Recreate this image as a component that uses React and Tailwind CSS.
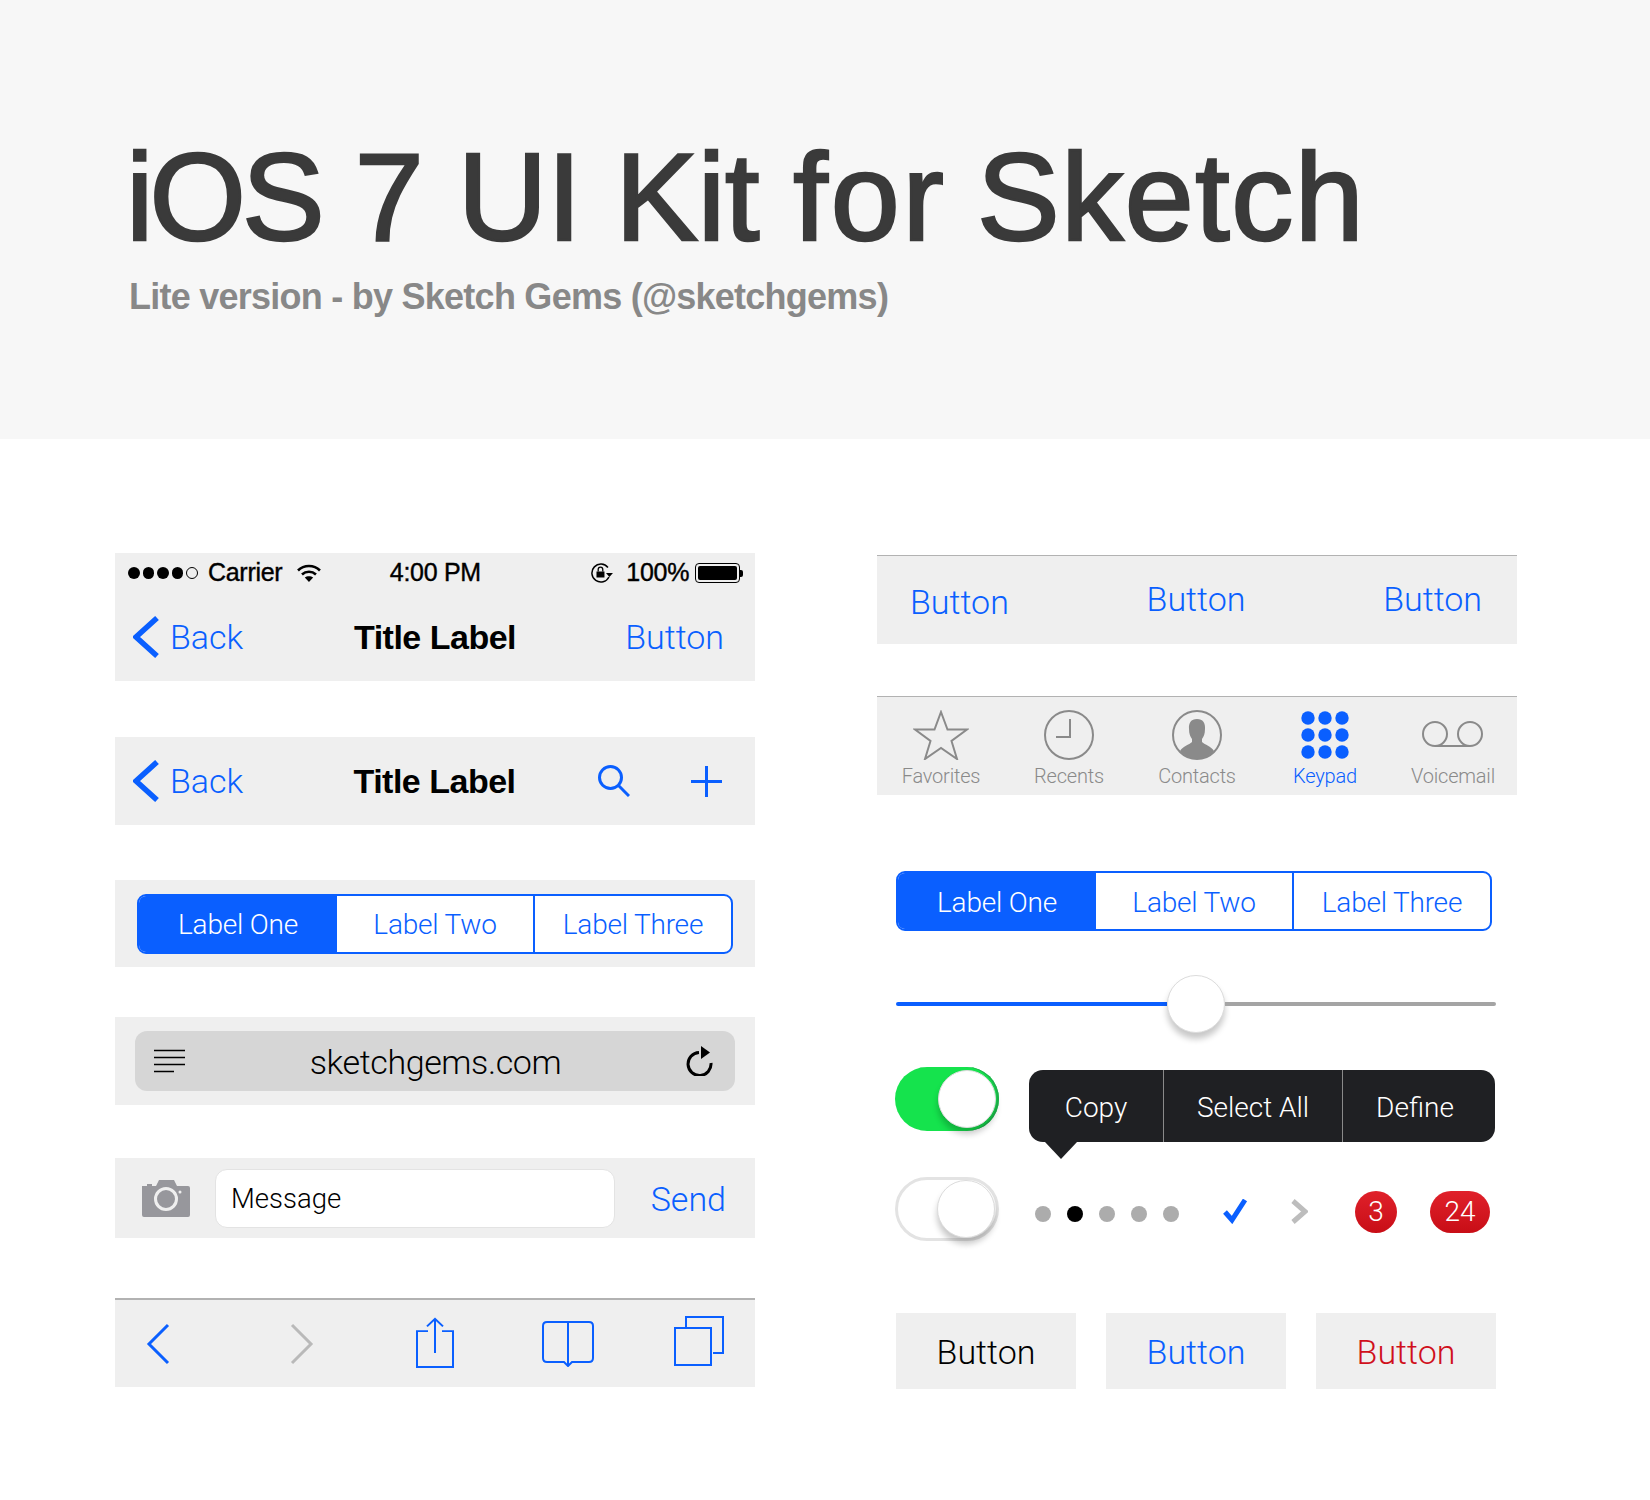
import React from "react";

const blue = "#0a5fff";
const light = "font-['Roboto',sans-serif] font-light";

function Chevron({ className, color = blue, width = 5.5, dir = "left", w = 26, h = 42 }) {
  const d = dir === "left" ? `M${w - 2} 2 L3 ${h / 2} L${w - 2} ${h - 2}` : `M2 2 L${w - 3} ${h / 2} L2 ${h - 2}`;
  return (
    <svg width={w} height={h} viewBox={`0 0 ${w} ${h}`} className={className} fill="none">
      <path d={d} stroke={color} strokeWidth={width} />
    </svg>
  );
}

function Segmented() {
  return (
    <div className={`flex w-[596px] h-[60px] rounded-[9px] border-2 border-[#0a5fff] overflow-hidden text-[28px] tracking-[-0.2px] text-[#0a5fff] bg-white ${light}`}>
      <div className="w-[198px] pt-[3px] flex items-center justify-center bg-[#0a5fff] text-white">Label One</div>
      <div className="w-[198px] pt-[3px] flex items-center justify-center border-r-2 border-[#0a5fff]">Label Two</div>
      <div className="flex-1 pt-[3px] flex items-center justify-center">Label Three</div>
    </div>
  );
}

function BackLink() {
  return (
    <div className="flex items-center w-[206px]">
      <Chevron />
      <span className={`ml-[11px] text-[34px] text-[#0a5fff] ${light}`}>Back</span>
    </div>
  );
}

function TitleLabel() {
  return <div className="flex-1 text-center text-[34px] font-bold tracking-[-0.5px] text-black">Title Label</div>;
}

function StatusBar() {
  return (
    <div className="h-[40px] pl-[13px] pr-[12px] flex items-center text-[25px] tracking-[-0.3px] text-black [-webkit-text-stroke:0.4px_#000]">
      <div className="flex items-center gap-[3px] w-[70px]">
        {[0, 1, 2, 3].map((i) => (
          <span key={i} className="w-[12px] h-[12px] rounded-full bg-black" />
        ))}
        <span className="w-[12px] h-[12px] rounded-full border border-black" />
      </div>
      <span className="ml-[10px] w-[89px]">Carrier</span>
      <svg width="24" height="18" viewBox="0 0 24 18" fill="none" stroke="#000" strokeWidth="2.6">
        <path d="M1 6.500 C7 0.500 17 0.500 23 6.500" />
        <path d="M5 10.500 C9 6.800 15 6.800 19 10.500" />
        <path d="M12 18 L7.800 13.600 C10 11.800 14 11.800 16.200 13.600 Z" fill="#000" stroke="none" />
      </svg>
      <span className="ml-[69px] w-[233px]">4:00 PM</span>
      <svg width="24" height="20" viewBox="0 0 24 20" fill="none" className="-ml-[32px]">
        <path d="M18 4.500 A9 9 0 1 0 19 14" stroke="#000" strokeWidth="1.500" />
        <path d="M16 10 L23 10 L19.500 14 Z" fill="#000" />
        <rect x="6.500" y="8.500" width="8" height="6" fill="#000" />
        <path d="M8.200 8.500 V6.500 A2.300 2.300 0 0 1 12.800 6.500 V8.500" stroke="#000" strokeWidth="1.300" />
      </svg>
      <span className="ml-[12px]">100%</span>
      <div className="ml-[6px] w-[45px] h-[20px] rounded-[4px] border border-black p-[2px]">
        <div className="w-full h-full rounded-[2px] bg-black" />
      </div>
      <span className="w-[3px] h-[7px] bg-black rounded-r-[2px]" />
    </div>
  );
}

function TabBar() {
  const grey = "#8a8a8a";
  const items = [
    {
      label: "Favorites",
      icon: (
        <svg width="56" height="50" viewBox="0 0 56 50" fill="none" stroke={grey} strokeWidth="2">
          <path d="M28 2 L34.500 19.500 L54 19.500 L38.500 31 L44 49 L28 38 L12 49 L17.500 31 L2 19.500 L21.500 19.500 Z" />
        </svg>
      ),
    },
    {
      label: "Recents",
      icon: (
        <svg width="50" height="50" viewBox="0 0 50 50" fill="none" stroke={grey} strokeWidth="2">
          <circle cx="25" cy="25" r="24" />
          <path d="M26 9 V27 H12" />
        </svg>
      ),
    },
    {
      label: "Contacts",
      icon: (
        <svg width="50" height="50" viewBox="0 0 50 50" fill="none">
          <circle cx="25" cy="25" r="24" stroke={grey} strokeWidth="2" />
          <path
            d="M25 9 C31 9 33.500 13 33 19 C33 24 31.500 27 30 29 L30 32 C33 35 39 36 42 41 C38 46 31 49 25 49 C19 49 12 46 8 41 C11 36 17 35 20 32 L20 29 C18.500 27 17 24 17 19 C16.500 13 19 9 25 9 Z"
            fill={grey}
          />
        </svg>
      ),
    },
    {
      label: "Keypad",
      active: true,
      icon: (
        <svg width="48" height="48" viewBox="0 0 48 48" fill={blue}>
          {[7, 24, 41].map((y) =>
            [7, 24, 41].map((x) => <circle key={`${x}-${y}`} cx={x} cy={y} r="6.700" />)
          )}
        </svg>
      ),
    },
    {
      label: "Voicemail",
      icon: (
        <svg width="62" height="50" viewBox="0 0 62 50" fill="none" stroke={grey} strokeWidth="2">
          <circle cx="13" cy="24" r="12" />
          <circle cx="48" cy="24" r="12" />
          <path d="M13 36 H48" />
        </svg>
      ),
    },
  ];
  return (
    <div className="h-[99px] mt-[52px] bg-[#efefef] border-t border-[#b2b2b2] flex">
      {items.map((item) => (
        <div key={item.label} className="w-[128px] flex flex-col items-center">
          <div className="h-[52px] mt-[12px] flex items-center justify-center">{item.icon}</div>
          <span className={`text-[20px] tracking-[-0.2px] ${light} ${item.active ? "text-[#0a5fff]" : "text-[#8a8a8a]"}`}>
            {item.label}
          </span>
        </div>
      ))}
    </div>
  );
}

function Knob() {
  return <div className="w-[58px] h-[58px] rounded-full bg-white border border-[#dcdcdc] shadow-[0_6px_6px_rgba(0,0,0,0.22)]" />;
}

export default function App() {
  return (
    <div className="w-[1650px] min-h-[1500px] bg-white font-['Liberation_Sans',Arial,sans-serif]">
      {/* Header */}
      <header className="h-[439px] bg-[#f7f7f7] pl-[126px] pt-[135px]">
        <h1 className="text-[124px] leading-none tracking-[-0.3px] text-[#3a3a3a] [-webkit-text-stroke:2.5px_#3a3a3a]">
          <span className="tracking-[-4px]">iOS</span> 7 UI Kit <span className="tracking-[3px]">for</span>{" "}
          <span className="-ml-[4px] tracking-[1.5px]">Sketch</span>
        </h1>
        <p className="mt-[20px] ml-[3px] text-[36px] leading-none font-bold tracking-[-0.75px] text-[#888888]">Lite version - by Sketch Gems (@sketchgems)</p>
      </header>

      <main className="flex pl-[115px] gap-[122px]">
        {/* Left column */}
        <div className="w-[640px] pt-[114px]">
          <div className="h-[128px] bg-[#efefef]">
            <StatusBar />
            <div className="h-[88px] flex items-center pl-[18px] pr-[31px]">
              <BackLink />
              <TitleLabel />
              <div className={`w-[193px] text-right text-[34px] text-[#0a5fff] ${light}`}>Button</div>
            </div>
          </div>

          <div className="mt-[56px] h-[88px] bg-[#efefef] flex items-center pl-[18px] pr-[33px]">
            <BackLink />
            <TitleLabel />
            <div className="w-[192px] flex items-center justify-end gap-[61px]">
              <svg width="32" height="32" viewBox="0 0 32 32" fill="none" stroke={blue} strokeWidth="3">
                <circle cx="12.500" cy="12.500" r="11" />
                <path d="M20 20 L31 31" />
              </svg>
              <svg width="31" height="31" viewBox="0 0 31 31" fill="none" stroke={blue} strokeWidth="3">
                <path d="M15.500 0 V31 M0 15.500 H31" />
              </svg>
            </div>
          </div>

          <div className="mt-[55px] h-[87px] bg-[#efefef] flex items-center justify-center">
            <Segmented />
          </div>

          <div className="mt-[50px] h-[88px] bg-[#efefef] flex items-center justify-center">
            <div className="w-[600px] h-[60px] rounded-[12px] bg-[#d6d6d6] flex items-center pl-[19px] pr-[21px] text-black">
              <svg width="31" height="24" viewBox="0 0 31 24" stroke="#000" strokeWidth="1.600">
                <path d="M0 1.500 H31 M0 8.500 H31 M0 15.500 H31 M0 22.500 H20" />
              </svg>
              <span className={`flex-1 pt-[2px] text-center text-[34px] tracking-[-0.4px] ${light}`}>sketchgems.com</span>
              <svg width="28" height="30" viewBox="0 0 28 30" fill="none">
                <path d="M13 6.500 A11.500 11.500 0 1 0 25 17" stroke="#000" strokeWidth="3" />
                <path d="M15 0 L24 6.500 L15 13 Z" fill="#000" />
              </svg>
            </div>
          </div>

          <div className="mt-[53px] h-[80px] bg-[#efefef] flex items-center pl-[27px] pr-[29px]">
            <svg width="48" height="37" viewBox="0 0 48 37">
              <path
                fillRule="evenodd"
                fill="#97979c"
                d="M0 6 H5 V4 H10 V6 H14 L17 0 H32 L35 6 H46 Q48 6 48 8 V35 Q48 37 46 37 H2 Q0 37 0 35 Z M24 7 A12 12 0 1 0 24 31 A12 12 0 1 0 24 7 Z M24 10 A9 9 0 1 1 24 28 A9 9 0 1 1 24 10 Z"
              />
              <circle cx="38" cy="12" r="1.500" fill="#efefef" />
            </svg>
            <div className={`ml-[25px] w-[400px] h-[59px] rounded-[12px] bg-white border border-[#e3e3e3] flex items-center pl-[15px] pt-[2px] text-[27.500px] text-black ${light}`}>
              Message
            </div>
            <span className={`ml-auto pt-[2px] text-[34px] text-[#0a5fff] ${light}`}>Send</span>
          </div>

          <div className="mt-[60px] h-[89px] bg-[#efefef] border-t-2 border-[#b2b2b2] flex items-center pl-[31px]">
            <Chevron w={24} h={42} width={3} />
            <Chevron dir="right" color="#b9b9b9" w={24} h={42} width={3} className="ml-[120px]" />
            <svg width="38" height="51" viewBox="0 0 38 54" preserveAspectRatio="none" fill="none" stroke={blue} strokeWidth="2" className="ml-[102px] mb-[3px]">
              <path d="M12 15 H1 V53 H37 V15 H26" />
              <path d="M19 38 V2 M11 10 L19 2 L27 10" />
            </svg>
            <svg width="52" height="47" viewBox="0 0 52 47" fill="none" stroke={blue} strokeWidth="2" className="ml-[88px]">
              <path d="M26 2 H5 Q1 2 1 6 V38 Q1 42 5 42 H22 L26 46 L30 42 H47 Q51 42 51 38 V6 Q51 2 47 2 Z M26 2 V46" />
            </svg>
            <svg width="50" height="50" viewBox="0 0 50 50" fill="none" stroke={blue} strokeWidth="2" className="ml-[80px] mb-[5px]">
              <path d="M12 11 V1 H49 V37 H39" />
              <rect x="1" y="12" width="36" height="37" />
            </svg>
          </div>
        </div>

        {/* Right column */}
        <div className="w-[640px] pt-[116px]">
          <div className={`h-[89px] bg-[#efefef] border-t border-[#b2b2b2] flex items-center pl-[33px] pr-[35px] pb-[2px] text-[34px] text-[#0a5fff] ${light}`}>
            <span className="mt-[6px]">Button</span>
            <span className="ml-auto">Button</span>
            <span className="ml-auto">Button</span>
          </div>

          <TabBar />

          <div className="pl-[19px] w-[620px]">
            <div className="mt-[76px]">
              <Segmented />
            </div>

            {/* Slider */}
            <div className="mt-[43px] w-[600px] h-[59px] flex items-center">
              <div className="w-[271px] h-[4px] rounded-l-full bg-[#0a5fff]" />
              <Knob />
              <div className="flex-1 h-[4px] rounded-r-full bg-[#a4a4a4]" />
            </div>

            {/* Toggle + menu */}
            <div className="mt-[34px] -ml-[1px] flex items-start">
              <div className="w-[104px] h-[64px] rounded-full bg-[#15e34d] flex items-center justify-end pr-[3px] shadow-[inset_-2px_0_0_#20b24d]">
                <Knob />
              </div>
              <div className={`relative ml-[30px] mt-[3px] w-[466px] h-[72px] rounded-[14px] bg-[#1f2023] flex text-[28px] text-white ${light}`}>
                <div className="w-[135px] pt-[3px] flex items-center justify-center border-r border-[#8a8a8a]">Copy</div>
                <div className="w-[179px] pt-[3px] flex items-center justify-center border-r border-[#8a8a8a]">Select All</div>
                <div className="flex-1 pt-[3px] pr-[8px] flex items-center justify-center">Define</div>
                <svg width="32" height="17" viewBox="0 0 32 17" className="absolute left-[16px] top-full">
                  <path d="M0 0 H32 L16 17 Z" fill="#1f2023" />
                </svg>
              </div>
            </div>

            {/* Toggle + indicators */}
            <div className="mt-[35px] -ml-[1px] flex items-start">
              <div className="w-[104px] h-[64px] rounded-full bg-white border-[3px] border-[#e3e3e3] flex items-center justify-end pr-[1px]">
                <Knob />
              </div>
              <div className="ml-[36px] mt-[29px] flex gap-[16px]">
                {[0, 1, 2, 3, 4].map((i) => (
                  <span key={i} className={`w-[16px] h-[16px] rounded-full ${i === 1 ? "bg-black" : "bg-[#acacac]"}`} />
                ))}
              </div>
              <svg width="26" height="25" viewBox="0 0 26 25" fill="none" stroke={blue} strokeWidth="5" className="ml-[43px] mt-[22px]">
                <path d="M3 13 L10 21 L23 1" />
              </svg>
              <svg width="17" height="25" viewBox="0 0 17 25" fill="none" stroke="#bdbdbd" strokeWidth="5" className="ml-[43px] mt-[22px]">
                <path d="M2 2 L14 12.500 L2 23" />
              </svg>
              <div className={`ml-[47px] mt-[14px] w-[42px] h-[42px] rounded-full bg-gradient-to-b from-[#e0202a] to-[#c80d16] flex items-center justify-center text-[28px] text-white ${light}`}>3</div>
              <div className={`ml-[33px] mt-[14px] w-[60px] h-[42px] rounded-full bg-gradient-to-b from-[#e0202a] to-[#c80d16] flex items-center justify-center text-[28px] text-white ${light}`}>24</div>
            </div>

            {/* Buttons */}
            <div className={`mt-[72px] flex gap-[30px] text-[34px] ${light}`}>
              <div className="w-[180px] h-[76px] pt-[2px] bg-[#efefef] flex items-center justify-center text-black">Button</div>
              <div className="w-[180px] h-[76px] pt-[2px] bg-[#efefef] flex items-center justify-center text-[#0a5fff]">Button</div>
              <div className="w-[180px] h-[76px] pt-[2px] bg-[#efefef] flex items-center justify-center text-[#d0101c]">Button</div>
            </div>
          </div>
        </div>
      </main>
    </div>
  );
}
